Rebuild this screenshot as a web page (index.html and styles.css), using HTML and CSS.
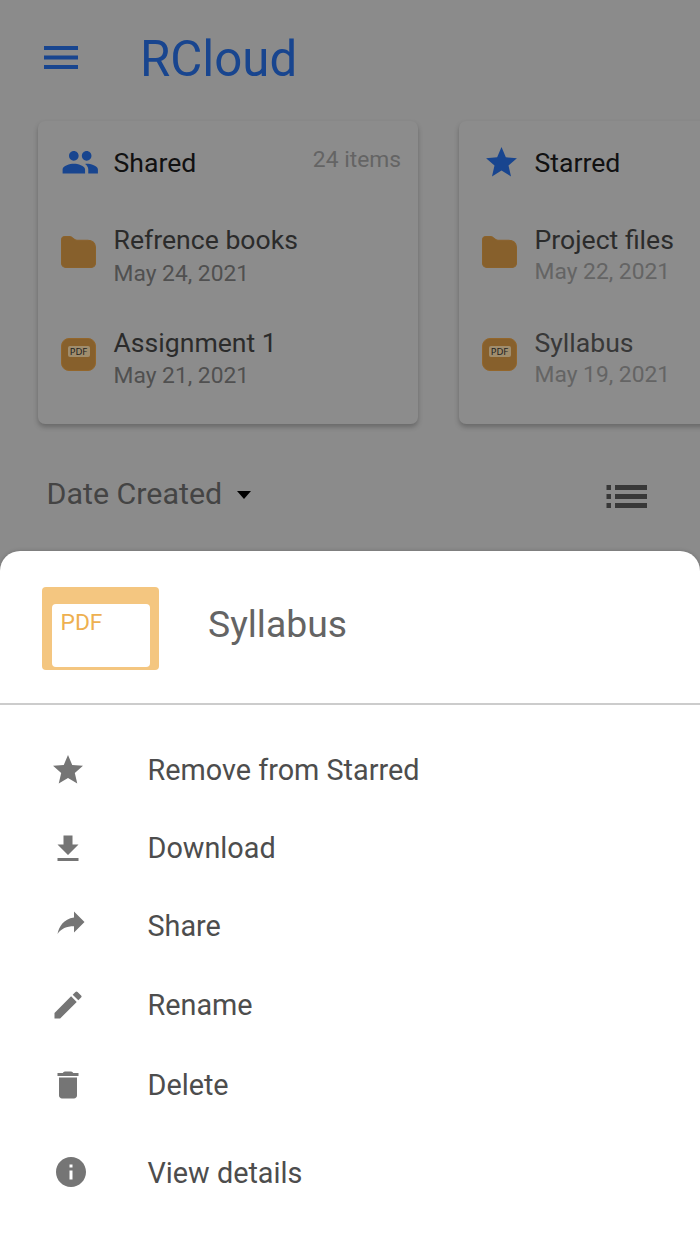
FILE: index.html
```html
<!DOCTYPE html>
<html lang="en">
<head>
<meta charset="utf-8">
<title>RCloud</title>
<link rel="stylesheet" href="styles.css">
</head>
<body>
<div class="app">
  <header class="topbar">
    <svg class="burger" viewBox="0 0 34 24"><path d="M0 0h34v4H0zM0 9.5h34v4H0zM0 19h34v4H0z"/></svg>
    <h1 class="brand">RCloud</h1>
  </header>

  <section class="cards">
    <article class="card">
      <div class="card-head">
        <span class="slot"><svg class="people" viewBox="0 0 24 24"><path d="M16 11c1.66 0 2.99-1.34 2.99-3S17.66 5 16 5s-3 1.34-3 3 1.34 3 3 3zm-8 0c1.66 0 2.99-1.34 2.99-3S9.66 5 8 5 5 6.34 5 8s1.34 3 3 3zm0 2c-2.33 0-7 1.17-7 3.5V19h14v-2.500c0-2.330-4.670-3.500-7-3.500zm8 0c-.29 0-.62.020-.970.050 1.160.840 1.970 1.970 1.970 3.450V19h6v-2.500c0-2.330-4.670-3.500-7-3.500z"/></svg></span>
        <span class="card-title">Shared</span>
        <span class="count">24 items</span>
      </div>
      <div class="file">
        <svg class="folder" viewBox="0 0 34 31"><path d="M4 .5h4.500c3 0 3.500 3.500 7 3.500H26c4.500 0 7.500 3 7.500 7v15.500a4 4 0 0 1-4 4H4.500a4 4 0 0 1-4-4V4A3.500 3.500 0 0 1 4 .5z"/></svg>
        <div><div class="name">Refrence books</div><div class="date">May 24, 2021</div></div>
      </div>
      <div class="file">
        <span class="pdf"><span class="pdf-tag">PDF</span></span>
        <div><div class="name">Assignment 1</div><div class="date">May 21, 2021</div></div>
      </div>
    </article>

    <article class="card card-starred">
      <div class="card-head">
        <span class="slot"><svg class="fav" viewBox="0 0 24 24"><path d="M12 17.270L18.180 21l-1.640-7.030L22 9.240l-7.190-.610L12 2 9.190 8.630 2 9.240l5.460 4.730L5.820 21z"/></svg></span>
        <span class="card-title">Starred</span>
      </div>
      <div class="file">
        <svg class="folder" viewBox="0 0 34 31"><path d="M4 .5h4.500c3 0 3.500 3.500 7 3.500H26c4.500 0 7.500 3 7.500 7v15.500a4 4 0 0 1-4 4H4.500a4 4 0 0 1-4-4V4A3.500 3.500 0 0 1 4 .5z"/></svg>
        <div><div class="name">Project files</div><div class="date">May 22, 2021</div></div>
      </div>
      <div class="file">
        <span class="pdf"><span class="pdf-tag">PDF</span></span>
        <div><div class="name name-dim">Syllabus</div><div class="date">May 19, 2021</div></div>
      </div>
    </article>
  </section>

  <div class="sortbar">
    <span class="sort">Date Created</span>
    <svg class="caret" viewBox="0 0 14 8"><path d="M0 0h14L7 8z"/></svg>
    <svg class="list" viewBox="0 0 41 23"><path d="M.5 0h4.500v5H.5zM9 0h32v5H9zM.5 9h4.500v5H.5zM9 9h32v5H9zM.5 18h4.500v5H.5zM9 18h32v5H9z"/></svg>
  </div>

  <section class="sheet">
    <div class="sheet-head">
      <div class="thumb"><div class="thumb-page">PDF</div></div>
      <h2 class="sheet-title">Syllabus</h2>
    </div>
    <ul class="menu">
      <li class="item"><svg viewBox="0 0 24 24"><path d="M12 17.270L18.180 21l-1.640-7.030L22 9.240l-7.190-.610L12 2 9.190 8.630 2 9.240l5.460 4.730L5.820 21z"/></svg><span>Remove from Starred</span></li>
      <li class="item item-download"><svg viewBox="0 0 24 24"><path d="M19 9h-4V3H9v6H5l7 7 7-7zM5 18v2h14v-2H5z"/></svg><span>Download</span></li>
      <li class="item item-share"><svg viewBox="0 0 24 24"><path d="M14 9V5l7 7-7 7v-4.100c-5 0-8.500 1.600-11 5.100 1-5 4-10 11-11z"/></svg><span>Share</span></li>
      <li class="item item-rename"><svg viewBox="0 0 24 24"><path d="M3 17.250V21h3.750L17.810 9.940l-3.750-3.750L3 17.250zM20.710 7.040a1 1 0 0 0 0-1.410l-2.340-2.340a1 1 0 0 0-1.410 0l-1.830 1.830 3.750 3.750 1.830-1.830z"/></svg><span>Rename</span></li>
      <li class="item item-delete"><svg viewBox="0 0 24 24"><path d="M6 19c0 1.100.9 2 2 2h8c1.100 0 2-.9 2-2V7H6v12zM19 4h-3.500l-.6-.7q-.3-.3-.8-.3H9.900q-.5 0-.8.3l-.6.7H5v2h14V4z"/></svg><span>Delete</span></li>
      <li class="item item-info"><svg viewBox="0 0 24 24"><path d="M12 2C6.480 2 2 6.480 2 12s4.480 10 10 10 10-4.480 10-10S17.520 2 12 2zm1 15h-2v-6h2v6zm0-8h-2V7h2v2z"/></svg><span>View details</span></li>
    </ul>
  </section>
</div>
</body>
</html>
```
FILE: styles.css
```css
* { box-sizing: border-box; }
body {
  margin: 0;
  font-family: Roboto, "Liberation Sans", sans-serif;
  background: #8b8b8b;
}
.app {
  width: 700px;
  height: 1244px;
  overflow: hidden;
  display: flex;
  flex-direction: column;
  background: #8b8b8b;
  white-space: nowrap;
}
svg { display: block; flex: none; }

.topbar {
  height: 118px;
  padding-left: 44px;
  display: flex;
  align-items: center;
  gap: 62px;
}
.burger { width: 34px; height: 24px; margin-bottom: 2px; fill: #18458f; }
.brand {
  margin: 0;
  font-size: 49.200px;
  font-weight: 400;
  line-height: 60px;
  color: #18458f;
}

.cards {
  display: flex;
  gap: 41px;
  padding: 3px 0 0 38px;
}
.card {
  flex: none;
  width: 380px;
  height: 303px;
  padding-left: 23px;
  border-radius: 7px;
  background: #8c8c8c;
  box-shadow: 0 3px 5px rgba(0, 0, 0, .25);
}
.card-head {
  display: flex;
  align-items: center;
  height: 83px;
  margin-bottom: 20px;
  padding-right: 17px;
}
.slot {
  width: 35px;
  margin-right: 17.500px;
  display: flex;
  justify-content: center;
}
.people { width: 38.500px; height: 38.500px; margin-left: 3px; fill: #18458f; }
.fav { width: 37px; height: 37px; margin-left: 3px; fill: #18458f; }
.card-title { font-size: 26.600px; line-height: 32px; color: #111; }
.count { margin: 0 0 5px auto; font-size: 22.800px; line-height: 28px; color: #646464; }
.file {
  display: flex;
  align-items: flex-start;
  gap: 17.500px;
  height: 102.500px;
}
.folder { width: 35px; height: 32px; margin-top: 12px; fill: #87602c; stroke: #8b622b; }
.pdf {
  width: 35px;
  height: 33px;
  margin-top: 11.500px;
  padding-top: 7px;
  border: 1px solid #93662b;
  border-radius: 8px;
  background: #87602c;
  display: flex;
  justify-content: center;
  align-items: flex-start;
}
.pdf-tag {
  width: 22px;
  height: 11px;
  border-radius: 2px;
  background: #a08d6d;
  color: #222;
  font: 9.500px/11px "Noto Sans", sans-serif;
  text-align: center;
}
.name { font-size: 26.600px; line-height: 32px; color: #2b2b2b; }
.name-dim { color: #383838; }
.date { margin-top: 2px; font-size: 22.800px; line-height: 32px; color: #505050; }
.file + .file .date { margin-top: 1px; }
.card-starred .date, .card-starred .file + .file .date { margin-top: 0; color: #646464; }

.sortbar {
  height: 127px;
  padding: 0 53px 0 46.500px;
  display: flex;
  align-items: flex-start;
}
.sort { width: 176px; margin-top: 51px; font-size: 30.400px; line-height: 37px; color: #444; }
.caret { width: 14px; height: 8px; margin: 67px 0 0 14px; fill: #000; }
.list { width: 41px; height: 23px; margin: 61px 0 0 auto; fill: #383838; }

.sheet {
  flex: 1;
  border-radius: 20px 20px 0 0;
  background: #fff;
  box-shadow: 0 0 4px rgba(0, 0, 0, .2);
}
.sheet-head {
  height: 154px;
  padding: 35.500px 0 0 42px;
  display: flex;
  gap: 49px;
  border-bottom: 2px solid #ccc;
}
.thumb {
  width: 117px;
  height: 83.500px;
  padding: 17.500px 9.500px 3.500px;
  border-radius: 4px;
  background: #f4c680;
}
.thumb-page {
  height: 62.500px;
  padding: 4.500px 0 0 9px;
  border-radius: 4px;
  background: #fff;
  color: #eeb050;
  font-size: 22.800px;
  line-height: 28px;
}
.sheet-title {
  margin: 14.500px 0 0;
  font-size: 37.300px;
  font-weight: 400;
  line-height: 46px;
  color: #646464;
}
.menu { list-style: none; margin: 0; padding: 26px 0 0 50px; }
.item {
  height: 78px;
  display: flex;
  align-items: center;
  gap: 61.500px;
  font-size: 28.800px;
  line-height: 36px;
  color: #4d4d4d;
}
.item svg { width: 36px; height: 36px; fill: #757575; }
.item-download svg { margin-top: 2px; }
.item-share svg { margin: 0 -2.500px 8px 2.500px; }
.item-rename { height: 80px; }
.item-delete { height: 79px; }
.item-info { height: 81px; margin-top: 8px; }
.item-info svg { margin: 0 -3px 2px 3px; }
```
